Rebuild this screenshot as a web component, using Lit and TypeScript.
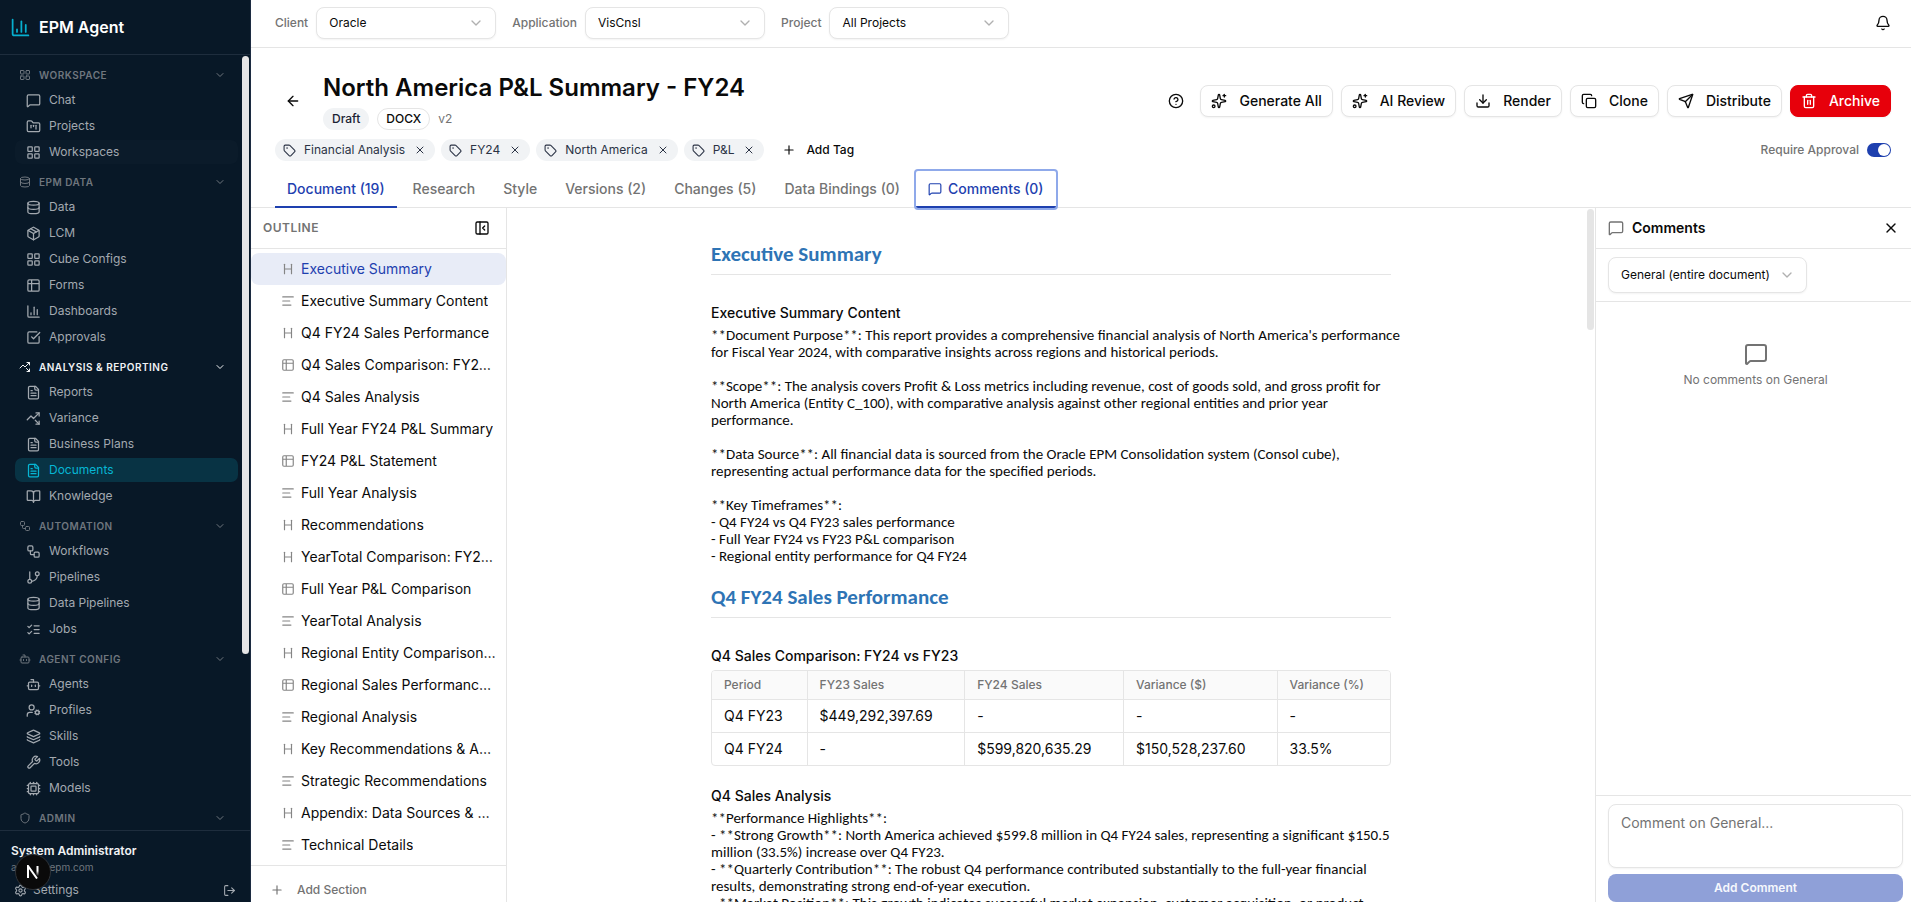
import { LitElement, html, css, svg, nothing } from "lit";
import { customElement, property } from "lit/decorators.js";
import { classMap } from "lit/directives/class-map.js";

const p = (...ds: string[]) => svg`${ds.map((d) => svg`<path d=${d}></path>`)}`;

const ICONS: Record<string, unknown> = {
  grid: svg`<rect x="3" y="3" width="7" height="7" rx="1"/><rect x="14" y="3" width="7" height="7" rx="1"/><rect x="14" y="14" width="7" height="7" rx="1"/><rect x="3" y="14" width="7" height="7" rx="1"/>`,
  message: p("M22 17a2 2 0 0 1-2 2H6.828a2 2 0 0 0-1.414.586l-2.202 2.202A.71.71 0 0 1 2 21.286V5a2 2 0 0 1 2-2h16a2 2 0 0 1 2 2z"),
  kanban: p("M4 20h16a2 2 0 0 0 2-2V8a2 2 0 0 0-2-2h-7.93a2 2 0 0 1-1.66-.9l-.82-1.2A2 2 0 0 0 7.93 3H4a2 2 0 0 0-2 2v13c0 1.1.9 2 2 2Z", "M8 10v4", "M12 10v2", "M16 10v6"),
  database: svg`<ellipse cx="12" cy="5" rx="9" ry="3"/>${p("M3 5V19A9 3 0 0 0 21 19V5", "M3 12A9 3 0 0 0 21 12")}`,
  package: p("M11 21.73a2 2 0 0 0 2 0l7-4A2 2 0 0 0 21 16V8a2 2 0 0 0-1-1.73l-7-4a2 2 0 0 0-2 0l-7 4A2 2 0 0 0 3 8v8a2 2 0 0 0 1 1.73z", "M12 22V12", "M3.29 7 12 12l8.71-5", "m7.5 4.27 9 5.15"),
  table: p("M9 3H5a2 2 0 0 0-2 2v4m6-6h10a2 2 0 0 1 2 2v4M9 3v18m0 0h10a2 2 0 0 0 2-2V9M9 21H5a2 2 0 0 1-2-2V9m0 0h18"),
  chart: p("M3 3v16a2 2 0 0 0 2 2h16", "M18 17V9", "M13 17V5", "M8 17v-3"),
  check: p("M21 10.656V19a2 2 0 0 1-2 2H5a2 2 0 0 1-2-2V5a2 2 0 0 1 2-2h12.344", "m9 11 3 3L22 4"),
  trend: p("M14.828 14.828 21 21", "M21 16v5h-5", "m21 3-9 9-4-4-6 6", "M21 8V3h-5"),
  file: p("M15 2H6a2 2 0 0 0-2 2v16a2 2 0 0 0 2 2h12a2 2 0 0 0 2-2V7Z", "M14 2v4a2 2 0 0 0 2 2h4", "M10 9H8", "M16 13H8", "M16 17H8"),
  book: p("M12 7v14", "M3 18a1 1 0 0 1-1-1V4a1 1 0 0 1 1-1h5a4 4 0 0 1 4 4 4 4 0 0 1 4-4h5a1 1 0 0 1 1 1v13a1 1 0 0 1-1 1h-6a3 3 0 0 0-3 3 3 3 0 0 0-3-3z"),
  workflow: svg`<rect x="3" y="3" width="8" height="8" rx="2"/><rect x="13" y="13" width="8" height="8" rx="2"/>${p("M7 11v4a2 2 0 0 0 2 2h4")}`,
  branch: svg`<circle cx="18" cy="6" r="3"/><circle cx="6" cy="18" r="3"/>${p("M6 3v12", "M18 9a9 9 0 0 1-9 9")}`,
  checks: p("m3 17 2 2 4-4", "m3 7 2 2 4-4", "M13 6h8", "M13 12h8", "M13 18h8"),
  bot: svg`<rect x="4" y="8" width="16" height="12" rx="2"/>${p("M12 8V4H8", "M2 14h2", "M20 14h2", "M15 13v2", "M9 13v2")}`,
  usercog: svg`<circle cx="9" cy="7" r="4"/><circle cx="18" cy="15" r="3"/>${p("M10 15H6a4 4 0 0 0-4 4v2", "m21.7 16.4-.9-.3", "m15.2 13.9-.9-.3", "m16.6 18.7.3-.9", "m19.1 12.2.3-.9", "m19.6 18.7-.4-1", "m16.8 12.3-.4-1", "m14.3 16.6 1-.4", "m20.7 13.8 1-.4")}`,
  layers: p("M12.83 2.18a2 2 0 0 0-1.66 0L2.6 6.08a1 1 0 0 0 0 1.83l8.58 3.91a2 2 0 0 0 1.66 0l8.58-3.9a1 1 0 0 0 0-1.83z", "M2 12a1 1 0 0 0 .58.91l8.6 3.91a2 2 0 0 0 1.65 0l8.58-3.9A1 1 0 0 0 22 12", "M2 17a1 1 0 0 0 .58.91l8.6 3.91a2 2 0 0 0 1.65 0l8.58-3.9A1 1 0 0 0 22 17"),
  wrench: p("M14.7 6.3a1 1 0 0 0 0 1.4l1.6 1.6a1 1 0 0 0 1.4 0l3.77-3.77a6 6 0 0 1-7.94 7.94l-6.91 6.91a2.12 2.12 0 0 1-3-3l6.91-6.91a6 6 0 0 1 7.94-7.94l-3.76 3.76z"),
  cpu: svg`<rect x="4" y="4" width="16" height="16" rx="2"/><rect x="8" y="8" width="8" height="8" rx="1"/>${p("M12 20v2", "M12 2v2", "M17 20v2", "M17 2v2", "M2 12h2", "M2 17h2", "M2 7h2", "M20 12h2", "M20 17h2", "M20 7h2", "M7 20v2", "M7 2v2")}`,
  shield: p("M20 13c0 5-3.5 7.5-7.66 8.95a1 1 0 0 1-.67-.01C7.5 20.5 4 18 4 13V6a1 1 0 0 1 1-1c2 0 4.5-1.2 6.24-2.72a1.17 1.17 0 0 1 1.52 0C14.51 3.81 17 5 19 5a1 1 0 0 1 1 1z"),
  settings: svg`<circle cx="12" cy="12" r="3"/>${p("M9.671 4.136a2.34 2.34 0 0 1 4.659 0 2.34 2.34 0 0 0 3.319 1.915 2.34 2.34 0 0 1 2.33 4.033 2.34 2.34 0 0 0 0 3.831 2.34 2.34 0 0 1-2.33 4.033 2.34 2.34 0 0 0-3.319 1.915 2.34 2.34 0 0 1-4.659 0 2.34 2.34 0 0 0-3.32-1.915 2.34 2.34 0 0 1-2.33-4.033 2.34 2.34 0 0 0 0-3.831A2.34 2.34 0 0 1 6.35 6.051a2.34 2.34 0 0 0 3.319-1.915")}`,
  logout: p("m16 17 5-5-5-5", "M21 12H9", "M9 21H5a2 2 0 0 1-2-2V5a2 2 0 0 1 2-2h4"),
  bell: p("M10.268 21a2 2 0 0 0 3.464 0", "M3.262 15.326A1 1 0 0 0 4 17h16a1 1 0 0 0 .74-1.673C19.41 13.956 18 12.499 18 8A6 6 0 0 0 6 8c0 4.499-1.411 5.956-2.738 7.326"),
  chevron: p("m6 9 6 6 6-6"),
  back: p("m12 19-7-7 7-7", "M19 12H5"),
  help: svg`<circle cx="12" cy="12" r="10"/>${p("M9.09 9a3 3 0 0 1 5.83 1c0 2-3 3-3 3", "M12 17h.01")}`,
  sparkles: svg`<circle cx="4" cy="20" r="2"/>${p("M11.017 2.814a1 1 0 0 1 1.966 0l1.051 5.558a2 2 0 0 0 1.594 1.594l5.558 1.051a1 1 0 0 1 0 1.966l-5.558 1.051a2 2 0 0 0-1.594 1.594l-1.051 5.558a1 1 0 0 1-1.966 0l-1.051-5.558a2 2 0 0 0-1.594-1.594l-5.558-1.051a1 1 0 0 1 0-1.966l5.558-1.051a2 2 0 0 0 1.594-1.594z", "M20 2v4", "M22 4h-4")}`,
  download: p("M12 15V3", "M21 15v4a2 2 0 0 1-2 2H5a2 2 0 0 1-2-2v-4", "m7 10 5 5 5-5"),
  copy: svg`<rect x="8" y="8" width="14" height="14" rx="2"/>${p("M4 16c-1.1 0-2-.9-2-2V4c0-1.1.9-2 2-2h10c1.1 0 2 .9 2 2")}`,
  send: p("M14.536 21.686a.5.5 0 0 0 .937-.024l6.5-19a.496.496 0 0 0-.635-.635l-19 6.5a.5.5 0 0 0-.024.937l7.93 3.18a2 2 0 0 1 1.112 1.11z", "m21.854 2.147-10.94 10.939"),
  trash: p("M3 6h18", "M19 6v14a2 2 0 0 1-2 2H7a2 2 0 0 1-2-2V6", "M8 6V4a2 2 0 0 1 2-2h4a2 2 0 0 1 2 2v2", "M10 11v6", "M14 11v6"),
  tag: svg`${p("M12.586 2.586A2 2 0 0 0 11.172 2H4a2 2 0 0 0-2 2v7.172a2 2 0 0 0 .586 1.414l8.704 8.704a2.426 2.426 0 0 0 3.42 0l6.58-6.58a2.426 2.426 0 0 0 0-3.42z")}<circle cx="7.5" cy="7.5" r=".5" fill="currentColor"/>`,
  x: p("M18 6 6 18", "m6 6 12 12"),
  plus: p("M5 12h14", "M12 5v14"),
  panel: svg`<rect x="3" y="3" width="18" height="18" rx="2"/>${p("M9 3v18", "m16 15-3-3 3-3")}`,
  heading: p("M6 12h12", "M6 20V4", "M18 20V4"),
  text: p("M21 5H3", "M15 12H3", "M17 19H3"),
};

const icon = (name: string, size = 16) =>
  html`<svg width=${size} height=${size} viewBox="0 0 24 24" fill="none" stroke="currentColor" stroke-width="2" stroke-linecap="round" stroke-linejoin="round" aria-hidden="true">${ICONS[name]}</svg>`;

const base = css`
  *, *::before, *::after { box-sizing: border-box; }
  svg { display: block; flex: none; }
  button, input, select, textarea { font: inherit; color: inherit; margin: 0; }
  button { background: none; border: 0; padding: 0; cursor: pointer; display: flex; align-items: center; }
  a { color: inherit; text-decoration: none; }
  h1, h2, h3, p, ul { margin: 0; padding: 0; }
  ul { list-style: none; }
`;

/* ---------- select ---------- */
@customElement("epm-select")
class EpmSelect extends LitElement {
  @property() label = "";
  @property() value = "";
  @property({ type: Boolean }) hidelabel = false;
  static styles = [base, css`
    :host { display: flex; align-items: center; gap: 8px; color: #737373; }
    label { font-weight: 500; }
    .box { position: relative; flex: 1; display: flex; width: var(--select-width, 180px); color: #0a0a0a; }
    select {
      appearance: none; width: 100%; height: var(--select-height, 32px); padding: 0 32px 0 12px;
      border: 1px solid #e5e5e5; border-radius: 8px; background: #fff;
      box-shadow: 0 1px 2px rgba(0, 0, 0, 0.05); cursor: pointer;
    }
    .chev { position: absolute; right: 12px; top: 0; bottom: 0; display: flex; align-items: center; pointer-events: none; color: #b0b0b0; }
  `];
  render() {
    return html`
      ${this.hidelabel ? nothing : html`<label for="field">${this.label}</label>`}
      <span class="box">
        <select id="field" aria-label=${this.label}><option>${this.value}</option></select>
        <span class="chev">${icon("chevron", 16)}</span>
      </span>`;
  }
}

/* ---------- sidebar ---------- */
type Section = { title: string; icon: string; strong?: boolean; items: [string, string][] };
const NAV: Section[] = [
  { title: "Workspace", icon: "grid", items: [["Chat", "message"], ["Projects", "kanban"], ["Workspaces", "grid"]] },
  { title: "EPM Data", icon: "database", items: [["Data", "database"], ["LCM", "package"], ["Cube Configs", "grid"], ["Forms", "table"], ["Dashboards", "chart"], ["Approvals", "check"]] },
  { title: "Analysis & Reporting", icon: "trend", strong: true, items: [["Reports", "file"], ["Variance", "trend"], ["Business Plans", "file"], ["Documents", "file"], ["Knowledge", "book"]] },
  { title: "Automation", icon: "workflow", items: [["Workflows", "workflow"], ["Pipelines", "branch"], ["Data Pipelines", "database"], ["Jobs", "checks"]] },
  { title: "Agent Config", icon: "bot", items: [["Agents", "bot"], ["Profiles", "usercog"], ["Skills", "layers"], ["Tools", "wrench"], ["Models", "cpu"]] },
  { title: "Admin", icon: "shield", items: [] },
];

@customElement("epm-sidebar")
class EpmSidebar extends LitElement {
  static styles = [base, css`
    :host {
      display: flex; flex-direction: column; position: relative; min-height: 0;
      background: #081827; color: #a3a9b0; border-right: 1px solid #1c2b41; font-size: 12px; line-height: 16px;
    }
    .brand { display: flex; align-items: center; gap: 8px; height: 55px; padding: 0 10px; border-bottom: 1px solid #1e2d3d; color: #fff; font-size: 16px; font-weight: 600; flex: none; }
    .brand svg { color: #06b0d0; }
    .scroll { flex: 1; min-height: 0; overflow: hidden; position: relative; padding: 8px 12px 0 15px; display: flex; flex-direction: column; gap: 6px; }
    .thumb { position: absolute; right: 1px; top: 1px; width: 7px; height: 598px; border-radius: 4px; background: #e5e5e5; }
    .section { display: flex; flex-direction: column; gap: 2px; }
    .head { height: 23px; gap: 8px; padding: 0 12px 0 4px; color: #6f767e; font-size: 10px; font-weight: 600; letter-spacing: 0.5px; text-transform: uppercase; }
    .head span { flex: 1; text-align: left; }
    .head.strong { color: #f0f2f4; }
    .list { display: flex; flex-direction: column; gap: 2px; }
    .item { display: flex; align-items: center; gap: 8px; height: 24px; padding: 0 11px; border-radius: 7px; }
    .item.hover { background: #0b1b2a; }
    .item.active { background: #083344; color: #06b6d4; }
    .foot { flex: none; height: 72px; overflow: hidden; border-top: 1px solid #1e2d3d; padding: 12px 12px 0 11px; }
    .name { color: #f0f2f4; font-weight: 600; }
    .mail { font-size: 10px; color: #6f767e; }
    .row { display: flex; justify-content: space-between; align-items: center; padding: 7px 2px 0 3px; }
    .row a { display: flex; align-items: center; gap: 6px; }
    .badge { position: absolute; left: 15px; bottom: 12px; width: 36px; height: 36px; border-radius: 50%; background: #0a0a0a; border: 1px solid #2e3237; justify-content: center; color: #fff; }
  `];
  render() {
    return html`
      <div class="brand">${icon("chart", 21)}<span>EPM Agent</span></div>
      <nav class="scroll">
        ${NAV.map((s) => html`
          <div class="section">
            <button class=${classMap({ head: true, strong: !!s.strong })}>${icon(s.icon, 12)}<span>${s.title}</span>${icon("chevron", 12)}</button>
            ${s.items.length ? html`<div class="list">${s.items.map(([name, ic]) => html`
              <a href="#" class=${classMap({ item: true, active: name === "Documents", hover: name === "Workspaces" })}>${icon(ic, 15)}<span>${name}</span></a>`)}</div>` : nothing}
          </div>`)}
        <div class="thumb"></div>
      </nav>
      <div class="foot">
        <div class="name">System Administrator</div>
        <div class="mail">admin@epm.com</div>
        <div class="row"><a href="#">${icon("settings", 13)}<span>Settings</span></a><button aria-label="Log out">${icon("logout", 13)}</button></div>
      </div>
      <button class="badge" aria-label="Developer tools">
        <svg width="14" height="14" viewBox="0 0 14 14" fill="none" stroke-width="2">
          <defs><linearGradient id="fade" x1="0" y1="0" x2="0" y2="1"><stop offset="0.5" stop-color="#fff"/><stop offset="1" stop-color="#fff" stop-opacity="0"/></linearGradient></defs>
          <path d="M2 13V1L11 13.500" stroke="#fff"/><rect x="10.500" y="1" width="2" height="10" fill="url(#fade)"/>
        </svg>
      </button>`;
  }
}

/* ---------- page header ---------- */
const ACTIONS: [string, string][] = [["Generate All", "sparkles"], ["AI Review", "sparkles"], ["Render", "download"], ["Clone", "copy"], ["Distribute", "send"], ["Archive", "trash"]];
const TAGS = ["Financial Analysis", "FY24", "North America", "P&L"];
const TABS = ["Document (19)", "Research", "Style", "Versions (2)", "Changes (5)", "Data Bindings (0)", "Comments (0)"];

@customElement("epm-header")
class EpmHeader extends LitElement {
  static styles = [base, css`
    :host { display: block; color: #0a0a0a; font-size: 12px; line-height: 16px; }
    .top { display: flex; align-items: center; gap: 16px; height: 48px; padding: 0 20px 2px 24px; border-bottom: 1px solid #e5e5e5; }
    .bell { margin-left: auto; }
    .title { display: flex; align-items: center; padding: 24px 20px 0 24px; gap: 12px; }
    .back { width: 36px; height: 32px; justify-content: center; flex: none; }
    h1 { font-size: 24px; line-height: 32px; font-weight: 600; }
    .meta { display: flex; align-items: center; gap: 8px; margin-top: 4px; color: #737373; }
    .pill { height: 22px; padding: 0 8px; border: 1px solid transparent; border-radius: 11px; display: flex; align-items: center; font-weight: 500; color: #1a2233; background: #f1f3f5; }
    .pill.line { background: #fff; border-color: #e5e5e5; color: #0a0a0a; }
    .actions { margin-left: auto; display: flex; align-items: center; gap: 8px; font-size: 14px; font-weight: 500; }
    .btn { height: 32px; gap: 12px; padding: 0 10px; border: 1px solid #e5e5e5; border-radius: 8px; background: #fff; box-shadow: 0 1px 2px rgba(0, 0, 0, 0.05); }
    .btn.danger { background: #e7000b; border-color: #e7000b; color: #fff; }
    .helpbtn { width: 32px; height: 32px; justify-content: center; }
    .tags { display: flex; align-items: center; gap: 6px; padding: 9px 20px 0 24px; }
    .tag { display: flex; align-items: center; height: 22px; padding: 0 8px; border-radius: 11px; background: #f1f3f5; color: #2b3345; gap: 8px; }
    .tag button { width: 14px; justify-content: center; }
    .addtag { gap: 10px; padding-left: 12px; font-weight: 500; }
    .approve { margin-left: auto; display: flex; align-items: center; gap: 8px; color: #737373; font-weight: 500; }
    .switch { appearance: none; width: 24px; height: 14px; border-radius: 7px; background: #1e40af; padding: 1px; display: flex; justify-content: flex-end; cursor: pointer; }
    .switch::after { content: ""; width: 12px; height: 12px; border-radius: 50%; background: #fff; }
    .tabs { display: flex; gap: 4px; padding: 10px 24px 0; border-bottom: 1px solid #e5e5e5; font-size: 14px; font-weight: 500; color: #737373; }
    .tab { height: 37px; padding: 0 12px; border-bottom: 2px solid transparent; margin-bottom: -1px; gap: 6px; }
    .tab.on { color: #1e40af; border-bottom-color: #1e40af; }
    .tab.focus { border-radius: 2px; box-shadow: 0 0 0 2px #8fa9ea; }
  `];
  render() {
    return html`
      <div class="top">
        <epm-select label="Client" value="Oracle"></epm-select>
        <epm-select label="Application" value="VisCnsl"></epm-select>
        <epm-select label="Project" value="All Projects"></epm-select>
        <button class="bell" aria-label="Notifications">${icon("bell", 16)}</button>
      </div>
      <div class="title">
        <button class="back" aria-label="Back">${icon("back", 16)}</button>
        <div>
          <h1>North America P&amp;L Summary - FY24</h1>
          <div class="meta"><span class="pill">Draft</span><span class="pill line">DOCX</span><span>v2</span></div>
        </div>
        <div class="actions">
          <button class="helpbtn" aria-label="Help">${icon("help", 16)}</button>
          ${ACTIONS.map(([t, ic]) => html`<button class=${classMap({ btn: true, danger: t === "Archive" })}>${icon(ic, 16)}${t}</button>`)}
        </div>
      </div>
      <div class="tags">
        ${TAGS.map((t) => html`<span class="tag">${icon("tag", 13)}<span>${t}</span><button aria-label="Remove ${t}">${icon("x", 12)}</button></span>`)}
        <button class="addtag">${icon("plus", 14)}Add Tag</button>
        <div class="approve"><label for="approval">Require Approval</label><input id="approval" class="switch" type="checkbox" role="switch" checked /></div>
      </div>
      <div class="tabs" role="tablist">
        ${TABS.map((t, i) => html`<button role="tab" class=${classMap({ tab: true, on: i === 0 || i === 6, focus: i === 6 })}>${i === 6 ? icon("message", 14) : nothing}${t}</button>`)}
      </div>`;
  }
}

/* ---------- outline ---------- */
const OUTLINE: [string, string][] = [
  ["heading", "Executive Summary"], ["text", "Executive Summary Content"], ["heading", "Q4 FY24 Sales Performance"],
  ["table", "Q4 Sales Comparison: FY24 vs FY23"], ["text", "Q4 Sales Analysis"], ["heading", "Full Year FY24 P&L Summary"],
  ["table", "FY24 P&L Statement"], ["text", "Full Year Analysis"], ["heading", "Recommendations"],
  ["heading", "YearTotal Comparison: FY24 vs FY23"], ["table", "Full Year P&L Comparison"], ["text", "YearTotal Analysis"],
  ["heading", "Regional Entity Comparison Summary"], ["table", "Regional Sales Performance FY24"], ["text", "Regional Analysis"],
  ["heading", "Key Recommendations & Actions"], ["text", "Strategic Recommendations"], ["heading", "Appendix: Data Sources & Methods"], ["text", "Technical Details"],
];

@customElement("epm-outline")
class EpmOutline extends LitElement {
  static styles = [base, css`
    :host { display: flex; flex-direction: column; min-height: 0; overflow: hidden; border-right: 1px solid #e5e5e5; font-size: 14px; line-height: 20px; color: #0a0a0a; }
    .head { flex: none; display: flex; align-items: center; justify-content: space-between; height: 41px; padding: 0 16px 0 12px; border-bottom: 1px solid #e5e5e5; }
    h2 { font-size: 12px; font-weight: 600; letter-spacing: 0.5px; color: #737373; text-transform: uppercase; }
    ul { flex: 1; min-height: 0; overflow: hidden; padding: 4px 0; }
    .row { width: 100%; height: 32px; gap: 6px; padding: 0 9px 0 30px; border-radius: 8px; text-align: left; }
    .row svg { color: #858585; }
    .row span { overflow: hidden; text-overflow: ellipsis; white-space: nowrap; }
    .row.on { background: #e8ecf7; color: #1e40af; }
    .foot { flex: none; height: 37px; border-top: 1px solid #e5e5e5; padding: 8px 19px 0; overflow: hidden; display: flex; align-items: flex-start; }
    .foot button { flex: none; gap: 13px; height: 32px; font-size: 12px; font-weight: 500; color: #737373; }
  `];
  render() {
    return html`
      <div class="head"><h2>Outline</h2><button aria-label="Collapse outline">${icon("panel", 16)}</button></div>
      <ul>${OUTLINE.map(([ic, t], i) => html`<li><button class=${classMap({ row: true, on: i === 0 })}>${icon(ic, 14)}<span>${t}</span></button></li>`)}</ul>
      <div class="foot"><button>${icon("plus", 14)}Add Section</button></div>`;
  }
}

/* ---------- document ---------- */
const SUMMARY = `**Document Purpose**: This report provides a comprehensive financial analysis of North America's performance for Fiscal Year 2024, with comparative insights across regions and historical periods.

**Scope**: The analysis covers Profit & Loss metrics including revenue, cost of goods sold, and gross profit for North America (Entity C_100), with comparative analysis against other regional entities and prior year performance.

**Data Source**: All financial data is sourced from the Oracle EPM Consolidation system (Consol cube), representing actual performance data for the specified periods.

**Key Timeframes**:
- Q4 FY24 vs Q4 FY23 sales performance
- Full Year FY24 vs FY23 P&L comparison
- Regional entity performance for Q4 FY24`;
const ANALYSIS = `**Performance Highlights**:
- **Strong Growth**: North America achieved $599.8 million in Q4 FY24 sales, representing a significant $150.5 million (33.5%) increase over Q4 FY23.
- **Quarterly Contribution**: The robust Q4 performance contributed substantially to the full-year financial results, demonstrating strong end-of-year execution.
- **Market Position**: This growth indicates successful market expansion, customer acquisition, or product`;

@customElement("epm-document")
class EpmDocument extends LitElement {
  static styles = [base, css`
    :host { display: block; position: relative; min-width: 0; min-height: 0; overflow: hidden; padding: 32px 24px 0; color: #0a0a0a; }
    .page { max-width: 680px; margin: 0 auto; }
    .thumb { position: absolute; right: 1px; top: 1px; width: 7px; height: 121px; border-radius: 4px; background: #e5e5e5; }
    h2 { font-family: Carlito, Lato, sans-serif; font-weight: 700; font-size: 21px; line-height: 28px; color: #2e74b5; border-bottom: 1px solid #e5e5e5; padding-bottom: 6px; margin-bottom: 28px; }
    h3 { font-size: 14px; line-height: 20px; font-weight: 500; margin-bottom: 4px; }
    .copy { font-family: Carlito, Lato, sans-serif; font-size: 15px; line-height: 17px; white-space: pre-line; margin-right: -16px; }
    .copy + h2 { margin-top: 18px; }
    .frame { border: 1px solid #e5e5e5; border-radius: 4px; overflow: hidden; margin-bottom: 20px; }
    table { width: 100%; border-collapse: collapse; font-size: 14px; line-height: 20px; }
    th, td { text-align: left; font-weight: 400; padding: 6px 12px; border-left: 1px solid #e5e5e5; border-top: 1px solid #e5e5e5; }
    th { font-size: 12px; line-height: 16px; font-weight: 500; color: #737373; background: #fafafa; border-top: 0; }
    th:first-child, td:first-child { border-left: 0; }
  `];
  render() {
    const rows = [["Q4 FY23", "$449,292,397.69", "-", "-", "-"], ["Q4 FY24", "-", "$599,820,635.29", "$150,528,237.60", "33.5%"]];
    return html`
      <article class="page">
        <h2>Executive Summary</h2>
        <h3>Executive Summary Content</h3>
        <div class="copy">${SUMMARY}</div>
        <h2>Q4 FY24 Sales Performance</h2>
        <h3>Q4 Sales Comparison: FY24 vs FY23</h3>
        <div class="frame"><table>
          <thead><tr>${["Period", "FY23 Sales", "FY24 Sales", "Variance ($)", "Variance (%)"].map((h) => html`<th>${h}</th>`)}</tr></thead>
          <tbody>${rows.map((r) => html`<tr>${r.map((c) => html`<td>${c}</td>`)}</tr>`)}</tbody>
        </table></div>
        <h3>Q4 Sales Analysis</h3>
        <div class="copy">${ANALYSIS}</div>
      </article>
      <div class="thumb"></div>`;
  }
}

/* ---------- comments ---------- */
@customElement("epm-comments")
class EpmComments extends LitElement {
  static styles = [base, css`
    :host { display: flex; flex-direction: column; min-height: 0; border-left: 1px solid #e5e5e5; color: #0a0a0a; font-size: 14px; line-height: 20px; }
    .head { flex: none; height: 41px; display: flex; align-items: center; gap: 8px; padding: 0 12px; border-bottom: 1px solid #e5e5e5; }
    .head svg { color: #737373; }
    .head button svg { color: #0a0a0a; }
    h2 { font-size: 14px; font-weight: 600; flex: 1; }
    .filter { flex: none; display: flex; padding: 8px 12px; border-bottom: 1px solid #e5e5e5; font-size: 12px; --select-height: 36px; --select-width: 199px; }
    .empty { flex: 1; display: flex; flex-direction: column; align-items: center; gap: 6px; padding: 40px 0 0 4px; color: #737373; font-size: 12px; line-height: 16px; }
    form { flex: none; display: flex; flex-direction: column; gap: 6px; border-top: 1px solid #e5e5e5; padding: 8px 8px 0 12px; }
    textarea { width: 100%; height: 64px; resize: none; padding: 8px 12px; border: 1px solid #e5e5e5; border-radius: 8px; box-shadow: 0 1px 2px rgba(0, 0, 0, 0.05); display: block; }
    textarea::placeholder { color: #737373; opacity: 1; }
    .send { height: 28px; justify-content: center; border-radius: 8px; background: #8fa0d8; color: #f6f8fd; font-size: 12px; font-weight: 600; }
  `];
  render() {
    return html`
      <div class="head">${icon("message", 16)}<h2>Comments</h2><button aria-label="Close comments">${icon("x", 16)}</button></div>
      <div class="filter"><epm-select hidelabel label="Comment scope" value="General (entire document)"></epm-select></div>
      <div class="empty">${icon("message", 24)}<p>No comments on General</p></div>
      <form><textarea aria-label="Comment" placeholder="Comment on General..."></textarea><button type="button" class="send">Add Comment</button></form>`;
  }
}

@customElement("app-root")
class AppRoot extends LitElement {
  static styles = css`
    :host { display: grid; grid-template-columns: 251px minmax(0, 1fr); height: 100vh; overflow: hidden; background: #fff; font-family: Inter, sans-serif; }
    .main { display: flex; flex-direction: column; min-height: 0; }
    .body { flex: 1; min-height: 0; display: grid; grid-template-columns: 256px minmax(0, 1fr) 316px; grid-template-rows: minmax(0, 1fr); }
  `;
  render() {
    return html`
      <epm-sidebar></epm-sidebar>
      <div class="main">
        <epm-header></epm-header>
        <div class="body"><epm-outline></epm-outline><epm-document></epm-document><epm-comments></epm-comments></div>
      </div>`;
  }
}
